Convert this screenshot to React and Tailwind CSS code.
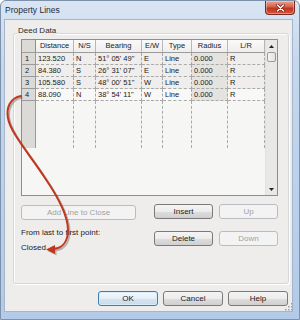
import React from "react";

const rows = [
  ["1", "123.520", "N", "51° 05' 49\"", "E", "Line", "0.000", "R"],
  ["2", "84.380", "S", "26° 31' 07\"", "E", "Line", "0.000", "R"],
  ["3", "105.580", "S", "48° 00' 51\"", "W", "Line", "0.000", "R"],
  ["4", "88.090", "N", "38° 54' 11\"", "W", "Line", "0.000", "R"],
];

const headers = ["", "Distance", "N/S", "Bearing", "E/W", "Type", "Radius", "L/R"];

const COLS = "grid grid-cols-[14px_38px_22px_46px_21px_29px_36px_37px]";

function Btn({ children, className, kind = "normal" }) {
  const look =
    kind === "disabled"
      ? "border-[#b9bdc1] bg-[#f3f3f3] text-[#a2a2a2]"
      : kind === "primary"
      ? "border-[#3c7fb1] bg-[linear-gradient(#f3f8fc,#e6eff7_50%,#d6e4f0_50%,#c9dbeb)] text-[#1b1b1b] shadow-[inset_0_0_0_1px_#d7ecfa]"
      : "border-[#7a7a7a] bg-[linear-gradient(#f4f4f4,#ececec_50%,#dedede_50%,#d0d0d0)] text-[#1b1b1b]";
  return (
    <div
      className={
        "flex h-[15px] items-center justify-center rounded-[3px] border text-[8px] leading-none " +
        look +
        " " +
        className
      }
    >
      {children}
    </div>
  );
}

export default function App() {
  return (
    <div className="relative h-[320px] w-[300px] overflow-hidden font-['Liberation_Sans',Arial,sans-serif] text-[#1b1b1b]">
      <div className="flex h-full w-full flex-col rounded-t-[6px] border border-[#7d91ab] bg-[linear-gradient(#d9e5f3,#c4d7ed_20%,#b3cbe8)]">
        {/* title bar */}
        <div className="flex h-[18px] shrink-0 items-start justify-between">
          <div className="pl-[4px] pt-[4px] text-[8.5px] leading-[10px] text-[#1e2b3c]">Property Lines</div>
          <div className="mr-[4px] flex h-[14px] w-[30px] items-center justify-center rounded-b-[4px] border border-t-0 border-[#7a2a1e] bg-[linear-gradient(#e9a493,#d6604a_45%,#c2341d_55%,#d2583c)] shadow-[inset_0_0_0_1px_rgba(255,255,255,0.35)]">
            <svg width="9" height="8" viewBox="0 0 9 8">
              <path d="M1.5 1 L7.5 7 M7.5 1 L1.5 7" stroke="#5a1a10" strokeWidth="2.6" strokeLinecap="round" />
              <path d="M1.5 1 L7.5 7 M7.5 1 L1.5 7" stroke="#ffffff" strokeWidth="1.5" strokeLinecap="round" />
            </svg>
          </div>
        </div>

        {/* client */}
        <div className="ml-[3px] mr-[6px] h-[293px] border border-[#a4b6cc] bg-[#eeedeb]">
          {/* group box */}
          <div className="relative ml-[8px] mt-[13px] h-[251px] w-[276px] rounded-[3px] border border-[#d3d8dc] shadow-[inset_1px_1px_0_#ffffff,1px_1px_0_#ffffff]">
            <div className="absolute left-[3px] top-[-8px] bg-[#eeedeb] px-[1px] text-[8px] leading-[10px] text-[#2a2a2a]">
              Deed Data
            </div>
            <div className="pl-[7px] pt-[5px]">
              {/* data grid */}
              <div className="flex h-[157px] w-[257px] border border-[#8a8f96] bg-[#f6f6f5]">
                <div className="flex w-[243px] flex-col">
                  <div className={COLS + " h-[13px] border-b border-[#9c9c9c] bg-[linear-gradient(#fafafa,#efeeec)]"}>
                    {headers.map((h, i) => (
                      <div
                        key={i}
                        className={
                          "flex items-center justify-center border-r text-[7.5px] leading-none " +
                          (i === 0 ? "border-[#8f8f8f] bg-[#dcdad6]" : "border-[#b8b8b8]")
                        }
                      >
                        {h}
                      </div>
                    ))}
                  </div>
                  {rows.map((r, ri) => (
                    <div key={ri} className={COLS + " h-[12px]"}>
                      {r.map((c, ci) => (
                        <div
                          key={ci}
                          className={
                            "flex items-center border-b border-r border-dashed pl-[2px] text-[7.5px] leading-none " +
                            (ci === 0
                              ? "border-solid border-[#9a9a9a] bg-[#dcdad6] pl-[3px]"
                              : ci === 6
                              ? "border-[#a9a9a9] bg-[#e4e3e0]"
                              : ri === 3
                              ? "border-[#a9a9a9] bg-[#f8f8f7]"
                              : "border-[#a9a9a9] bg-[#efeeec]")
                          }
                        >
                          {c}
                        </div>
                      ))}
                    </div>
                  ))}
                  <div className={COLS + " flex-1"}>
                    {headers.map((h, i) => (
                      <div
                        key={i}
                        className={
                          "border-r " +
                          (i === 0
                            ? "border-solid border-[#9a9a9a] bg-[#dcdad6]"
                            : "border-dashed border-[#a9a9a9]")
                        }
                      />
                    ))}
                    <div />
                  </div>
                </div>
                {/* scrollbar */}
                <div className="flex w-[12px] flex-col border-l border-[#e0e0e0] bg-[#e8e8e8]">
                  <div className="flex h-[12px] items-center justify-center">
                    <svg width="5" height="3" viewBox="0 0 5 3">
                      <path d="M0 3 L2.5 0 L5 3 Z" fill="#222" />
                    </svg>
                  </div>
                  <div className="mx-[1px] h-[10px] rounded-[2px] border border-[#9a9a9a] bg-[linear-gradient(90deg,#f4f4f4,#e2e2e2)]" />
                  <div className="flex-1" />
                  <div className="flex h-[12px] items-center justify-center">
                    <svg width="5" height="3" viewBox="0 0 5 3">
                      <path d="M0 0 L2.5 3 L5 0 Z" fill="#222" />
                    </svg>
                  </div>
                </div>
              </div>

              {/* controls below grid */}
              <div className="flex">
                <div className="flex w-[115px] flex-col">
                  <Btn kind="disabled" className="mt-[9px] w-[115px]">Add Line to Close</Btn>
                  <div className="mt-[8px] text-[8px] leading-[10px]">From last to first point:</div>
                  <div className="mt-[5px] text-[8px] leading-[10px]">Closed</div>
                </div>
                <div className="ml-[18px] mt-[8px] grid grid-cols-[59px_59px] gap-x-[6px] gap-y-[5px]">
                  <Btn>Insert</Btn>
                  <Btn kind="disabled">Up</Btn>
                  <Btn>Delete</Btn>
                  <Btn kind="disabled">Down</Btn>
                </div>
              </div>
            </div>
          </div>

          {/* bottom buttons */}
          <div className="mt-[7px] flex justify-end gap-[5px] pr-[4px]">
            <Btn kind="primary" className="w-[60px]">OK</Btn>
            <Btn className="w-[60px]">Cancel</Btn>
            <Btn className="w-[60px]">Help</Btn>
          </div>
        </div>
      </div>

      {/* resize grip */}
      <svg className="pointer-events-none absolute left-[285px] top-[303px]" width="8" height="8" viewBox="0 0 8 8">
        {[[6, 0], [6, 3], [3, 3], [6, 6], [3, 6], [0, 6]].map(([x, y], i) => (
          <rect key={i} x={x} y={y} width="1.5" height="1.5" fill="#9aa0a8" />
        ))}
      </svg>

      {/* red annotation arrow */}
      <svg className="pointer-events-none absolute left-0 top-0" width="300" height="320" viewBox="0 0 300 320">
        <g transform="translate(1.5 1.5)" opacity="0.25">
          <path d="M21 96 C10 98 6 108 8 118 C10 132 30 155 45 178 C58 197 68 215 68 230 C68 242 62 248 54 249" fill="none" stroke="#000" strokeWidth="2" />
          <path d="M46 249.5 L55 245 L55 254 Z" fill="#000" />
        </g>
        <path d="M21 96 C10 98 6 108 8 118 C10 132 30 155 45 178 C58 197 68 215 68 230 C68 242 62 248 54 249" fill="none" stroke="#c2361c" strokeWidth="2" strokeLinecap="round" />
        <path d="M46 249.5 L55 245 L55 254 Z" fill="#c2361c" />
      </svg>
    </div>
  );
}
